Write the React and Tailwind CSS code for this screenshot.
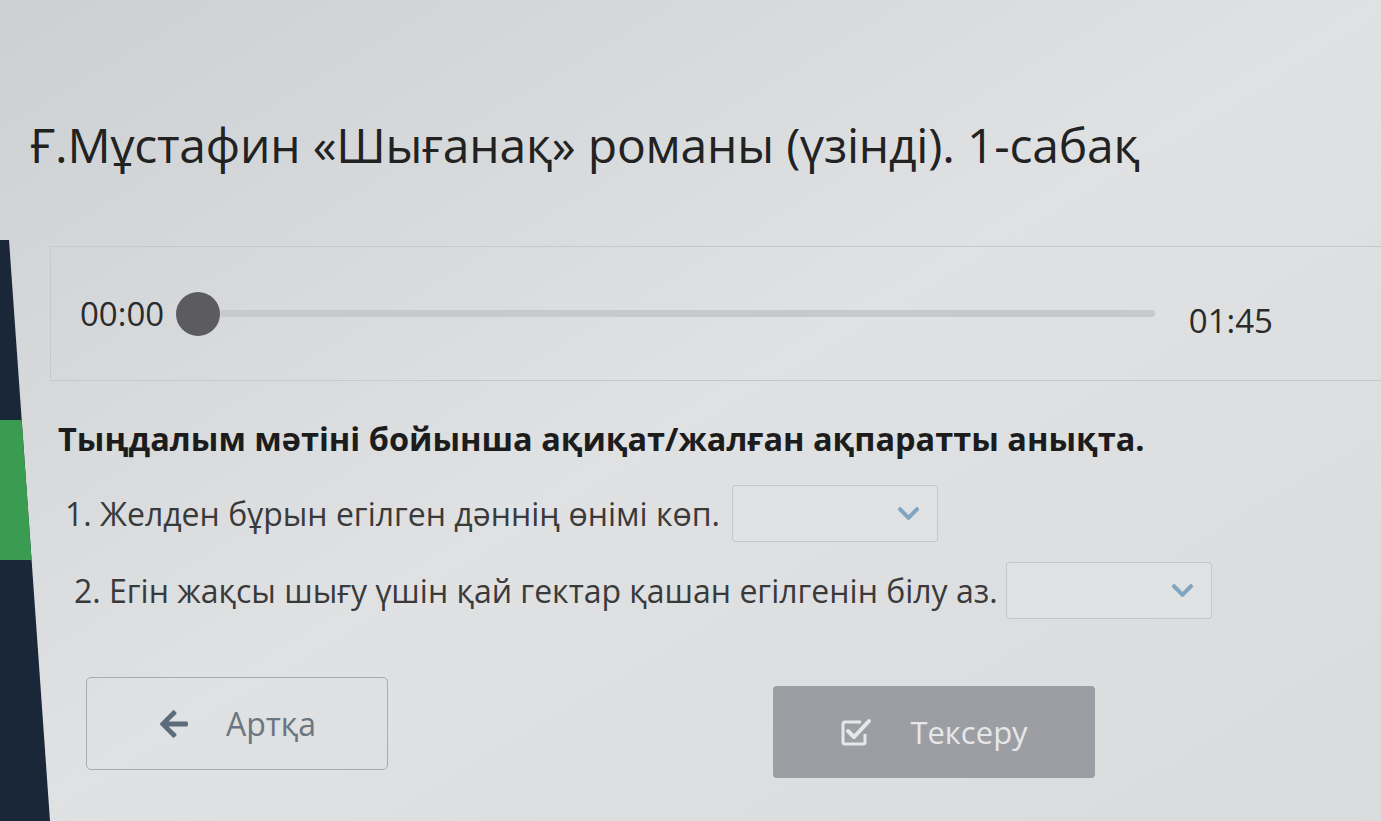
import { FaArrowLeft, FaChevronDown } from 'react-icons/fa';

const font = { fontFamily: '"Open Sans", "Noto Sans", sans-serif' };

function Select({ className = '' }) {
  return (
    <div
      className={`flex items-center justify-end h-[57px] w-[206px] border border-[#c3c8cb] rounded-[3px] bg-[#dfe1e2] pr-[16px] ${className}`}
    >
      <FaChevronDown className="text-[#7fa5c0] text-[25px]" />
    </div>
  );
}

// check-square-o style: outlined box, tick breaking out at top right
function CheckSquareIcon() {
  return (
    <svg width="32" height="30" viewBox="0 0 32 30" fill="none">
      <path d="M21 5H5a2 2 0 0 0-2 2v18a2 2 0 0 0 2 2h18a2 2 0 0 0 2-2v-8" stroke="currentColor" strokeWidth="3" />
      <path d="M8 14l6 6L29 4" stroke="currentColor" strokeWidth="4" strokeLinecap="round" strokeLinejoin="round" />
    </svg>
  );
}

export default function App() {
  return (
    <div
      className="w-[1381px] h-[821px] overflow-hidden bg-gradient-to-br from-[#cdd0d2] via-[#dfe1e3] to-[#d9dbdc] text-[#1f1f1f] flex flex-col"
      style={font}
    >
      {/* Title */}
      <div className="h-[240px] flex items-center pl-[30px] pt-[50px]">
        <h1 className="text-[48px] leading-none text-[#222] tracking-[-0.2px]">
          Ғ.Мұстафин «Шығанақ» романы (үзінді). 1-сабақ
        </h1>
      </div>

      <div className="flex flex-1">
        {/* Sidebar edge */}
        <div className="w-[50px] shrink-0 flex flex-col bg-[#1a2739] [clip-path:polygon(0_0,18%_0,100%_100%,0_100%)]">
          <div className="h-[180px]" />
          <div className="h-[140px] bg-[#3a9c51]" />
        </div>

        <div className="flex-1 flex flex-col">
          {/* Audio player */}
          <div className="mt-[6px] h-[135px] border-y border-l border-[#c6c9cb] flex items-center pl-[29px] pr-[108px]">
            <span className="text-[33px] text-[#2a2a2a]">00:00</span>
            <div className="ml-[12px] w-[44px] h-[44px] rounded-full bg-[#5b5b60] shrink-0" />
            <div className="flex-1 h-[7px] bg-[#c7c9cc] rounded-full" />
            <span className="ml-[34px] text-[33px] text-[#2a2a2a] mt-[14px]">01:45</span>
          </div>

          {/* Task */}
          <div className="pl-[8px] mt-[38px]">
            <p className="text-[32.5px] font-bold text-[#1c1c1c] leading-[40px]">
              Тыңдалым мәтіні бойынша ақиқат/жалған ақпаратты анықта.
            </p>
          </div>

          <div className="pl-[15px] mt-[26px] flex flex-col gap-[20px]">
            <div className="flex items-center gap-[12px]">
              <span className="text-[32px] text-[#3a3a3a]">1. Желден бұрын егілген дәннің өнімі көп.</span>
              <Select />
            </div>
            <div className="flex items-center gap-[8px] pl-[9px]">
              <span className="text-[32px] text-[#3a3a3a]">2. Егін жақсы шығу үшін қай гектар қашан егілгенін білу аз.</span>
              <Select />
            </div>
          </div>

          {/* Buttons */}
          <div className="mt-[58px] pl-[36px] flex items-start gap-[385px]">
            <button className="w-[302px] h-[93px] border border-[#a9adb0] rounded-[5px] flex items-center justify-center gap-[36px] text-[#6c7680]">
              <FaArrowLeft className="text-[32px] text-[#5d6c7a]" />
              <span className="text-[32px]">Артқа</span>
            </button>
            <button className="mt-[9px] w-[322px] h-[92px] bg-[#9c9ea3] rounded-[4px] flex items-center justify-center gap-[38px] text-[#e6e7e9]">
              <CheckSquareIcon />
              <span className="text-[31px]">Тексеру</span>
            </button>
          </div>
        </div>
      </div>
    </div>
  );
}
